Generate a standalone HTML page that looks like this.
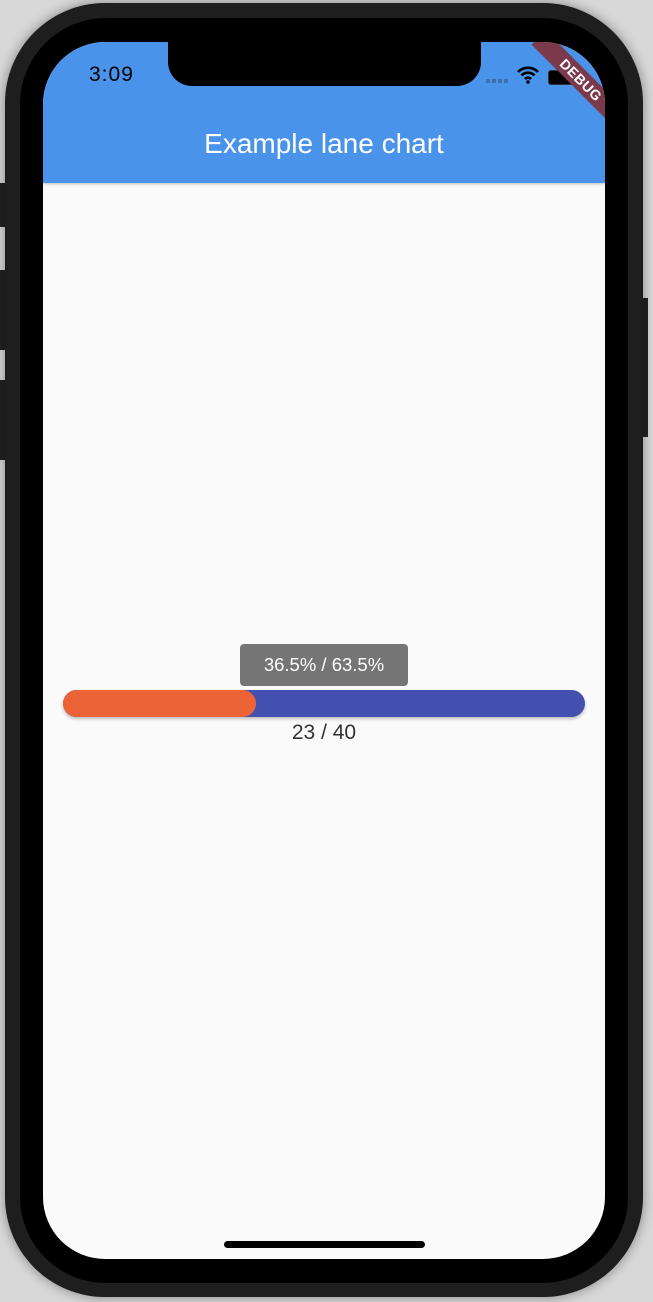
<!DOCTYPE html><html><head><style>
body{margin:0;width:653px;height:1302px;background:#d8d8d8;position:relative;overflow:hidden;font-family:"Liberation Sans",sans-serif}
.abs{position:absolute}
.frame{left:5px;top:3px;width:638px;height:1294px;border-radius:100px;background:#1e1e1e;box-shadow:0 0 12px rgba(0,0,0,.4)}
.bez{left:20px;top:18px;width:608px;height:1265px;border-radius:86px;background:#000}
.screen{left:43px;top:42px;width:562px;height:1217px;border-radius:62px;background:#fafafa;overflow:hidden}
.bar{left:0;top:0;width:562px;height:141px;background:#4a93ea;box-shadow:0 1px 3px rgba(0,0,0,.25)}
.notch{left:125px;top:0;width:313px;height:44px;background:#000;border-radius:0 0 24px 24px}
</style></head><body>
<div class="abs" style="left:0;top:183px;width:6px;height:44px;background:#222"></div>
<div class="abs" style="left:0;top:270px;width:6px;height:80px;background:#222"></div>
<div class="abs" style="left:0;top:380px;width:6px;height:80px;background:#222"></div>
<div class="abs" style="left:642px;top:298px;width:6px;height:139px;background:#222"></div>
<div class="abs frame"></div>
<div class="abs bez"></div>
<div class="abs screen">
 <div class="abs bar"></div>
 <div class="abs notch"></div>
 <div class="abs" style="left:46px;top:21px;font-size:21px;color:#000;letter-spacing:1px">3:09</div>
 <div class="abs" style="left:443px;top:37px;width:24px;height:4px;background:repeating-linear-gradient(90deg,#3a6fb0 0 4px,transparent 4px 6px)"></div>
 <svg class="abs" style="left:474px;top:24px" width="22" height="18" viewBox="0 0 22 18"><path d="M1 6A14 14 0 0 1 21 6M4.5 9.5A9 9 0 0 1 17.5 9.5M8 13A4 4 0 0 1 14 13" stroke="#000" stroke-width="2.6" fill="none"/><circle cx="11" cy="16" r="1.8"/></svg>
 <div class="abs" style="left:505px;top:28px;width:26px;height:13px;background:#000;border-radius:3px;border:1px solid #333"></div>
 <div class="abs" style="left:478px;top:28px;width:120px;height:20px;background:#7b3a4c;transform:rotate(45deg);color:#fff;font-weight:bold;font-size:14px;text-align:center;line-height:20px;letter-spacing:.5px">DEBUG</div>
 <div class="abs" style="left:0;top:86px;width:562px;text-align:center;color:#fff;font-size:28px">Example lane chart</div>
 <div class="abs" style="left:197px;top:602px;width:168px;height:42px;background:#757575;border-radius:4px;color:#fff;font-size:18.5px;text-align:center;line-height:42px">36.5% / 63.5%</div>
 <div class="abs" style="left:20px;top:648px;width:522px;height:27px;border-radius:14px;background:#4350af;overflow:hidden;box-shadow:0 2px 3px rgba(0,0,0,.25)"><div style="width:193px;height:27px;background:#ec6337;border-radius:0 14px 14px 0"></div></div>
 <div class="abs" style="left:0;top:679px;width:562px;text-align:center;color:#333;font-size:21px">23 / 40</div>
 <div class="abs" style="left:181px;top:1199px;width:201px;height:7px;border-radius:4px;background:#000"></div>
</div>
</body></html>
